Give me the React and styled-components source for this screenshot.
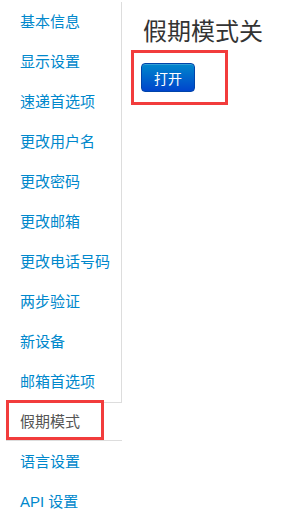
import React from 'react';
import styled, { createGlobalStyle } from 'styled-components';

const GlobalStyle = createGlobalStyle`
  body {
    margin: 0;
    background: #fff;
    font-family: "Liberation Sans", "Noto Sans CJK SC", sans-serif;
  }
`;

const Page = styled.div`
  display: flex;
  align-items: flex-start;
`;

const Nav = styled.ul`
  list-style: none;
  margin: 0;
  padding: 2px 0 0;
  width: 122px;
  flex-shrink: 0;
`;

const NavItem = styled.li`
  box-sizing: border-box;
  height: 40px;
  display: flex;
  align-items: center;
  padding: 0 0 3px 20px;
  font-size: 15px;
  color: #0088cc;
  border-right: 1px solid ${(p) => (p.$edge ? '#ddd' : 'transparent')};
`;

const ActiveItem = styled.li`
  position: relative;
  box-sizing: border-box;
  height: 39px;
  margin: 0 0 1px 6px;
  display: flex;
  align-items: center;
  padding: 0 0 2px 14px;
  font-size: 15px;
  color: #555;
  border-top: 1px solid #ddd;
  border-bottom: 1px solid #ddd;
`;

// red annotation frame drawn over the tab
const Mark = styled.span`
  position: absolute;
  left: 0;
  top: -3px;
  width: 98px;
  height: 40px;
  box-sizing: border-box;
  border: 3px solid #f23c3c;
`;

const Content = styled.div`
  display: flex;
  flex-direction: column;
  align-items: flex-start;
`;

const Title = styled.h1`
  margin: 15px 0 0 21px;
  font-size: 24px;
  line-height: 30px;
  font-weight: normal;
  color: #333;
  font-family: "Noto Sans CJK SC", serif;
`;

const Frame = styled.div`
  margin: 5px 0 0 9px;
  padding: 10px 30px 10px 7px;
  border: 3px solid #f23c3c;
`;

const Button = styled.button`
  display: block;
  box-sizing: border-box;
  width: 54px;
  height: 29px;
  padding: 0;
  font-size: 14px;
  font-family: "Noto Sans CJK SC", sans-serif;
  color: #fff;
  border: 1px solid #0044aa;
  border-radius: 4px;
  background: linear-gradient(to bottom, #0088cc, #0044cc);
  box-shadow: inset 0 1px 0 rgba(255, 255, 255, 0.2);
`;

const before = ['基本信息', '显示设置', '速递首选项', '更改用户名', '更改密码', '更改邮箱', '更改电话号码', '两步验证', '新设备', '邮箱首选项'];
const after = ['语言设置', 'API 设置'];

export default function App() {
  return (
    <Page>
      <GlobalStyle />
      <Nav>
        {before.map((t) => (
          <NavItem key={t} $edge>{t}</NavItem>
        ))}
        <ActiveItem>
          <Mark />
          假期模式
        </ActiveItem>
        {after.map((t) => (
          <NavItem key={t}>{t}</NavItem>
        ))}
      </Nav>
      <Content>
        <Title>假期模式关</Title>
        <Frame>
          <Button>打开</Button>
        </Frame>
      </Content>
    </Page>
  );
}
